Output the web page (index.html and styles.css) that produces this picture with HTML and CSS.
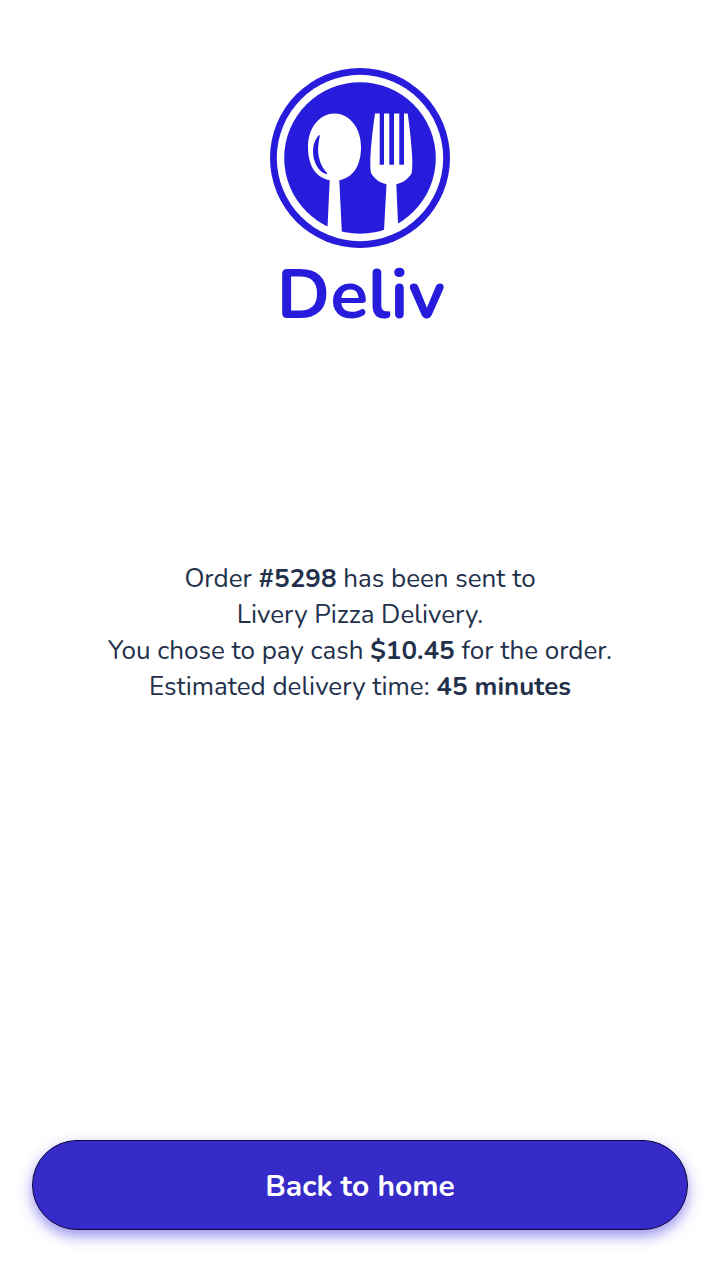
FILE: index.html
```html
<!DOCTYPE html>
<html lang="en">
<head>
<meta charset="utf-8">
<meta name="viewport" content="width=device-width, initial-scale=1">
<title>Deliv</title>
<link rel="stylesheet" href="styles.css">
</head>
<body>
<main class="screen">
  <header class="brand">
    <svg class="brand-mark" viewBox="0 0 180 180" aria-hidden="true">
      <circle cx="90" cy="90" r="90" fill="#271cdc"/>
      <circle cx="90" cy="90" r="83.2" fill="#fff"/>
      <circle cx="90" cy="90" r="75.8" fill="#271cdc"/>
      <path fill="#fff" d="M64.5 45.400C78 45.400 91 58 91 79C91 98 83 109.500 69.3 112.300L72 168L57.4 162L59.7 112.300C46 109.500 38 98 38 79C38 58 51 45.400 64.5 45.400Z"/>
      <path fill="#271cdc" d="M49.300 67C45.500 70 43 77 43 83C43 93 47.500 103 55.500 105.800Q57.800 106.200 57.400 105.500C50 98 47.500 87 48.200 79Q48.600 73 49.700 68.500Q50 66.500 49.300 67Z"/>
      <path fill="#fff" d="M105 45.400H109.700V96.800H114V45.400H119.300V96.800H124V45.400H129.300V96.800H134V45.400H137.700C140 61 141.500 77 142.300 91C142.300 97 142.300 101 141.700 105C138.500 111 132.500 115 126.300 116.200L128.300 162L113.800 166L116.500 116.200C110 115 104.500 111 101 105C100.300 101 100.300 97 100.300 91C101 76 102.800 60 105 45.400Z"/>
    </svg>
    <h1 class="brand-name">Deliv</h1>
  </header>
  <p class="message">
    Order <strong>#5298</strong> has been sent to<br>
    Livery Pizza Delivery.<br>
    You chose to pay cash <strong>$10.45</strong> for the order.<br>
    Estimated delivery time: <strong>45 minutes</strong>
  </p>
  <button class="home-button" type="button">Back to home</button>
</main>
</body>
</html>
```
FILE: styles.css
```css
* {
  box-sizing: border-box;
}

body {
  margin: 0;
  background: #fff;
  color: #22304b;
  font-family: Nunito, Lato, "Open Sans", sans-serif;
}

.screen {
  display: grid;
  grid-template-rows: 1fr auto 1fr;
  min-height: 100vh;
  padding: 36px 32px 50px;
}

.brand {
  display: flex;
  flex-direction: column;
  align-items: center;
  padding-top: 32px;
}

.brand-mark {
  width: 180px;
  height: 180px;
}

.brand-name {
  margin: 0;
  padding-left: 2px;
  color: #271cdc;
  font-size: 70px;
  line-height: 94px;
  font-weight: 700;
}

.message {
  margin: 0;
  font-size: 26px;
  font-weight: 400;
  line-height: 36px;
  text-align: center;
}

.message strong {
  font-weight: 700;
}

.home-button {
  align-self: end;
  height: 90px;
  padding: 2px 24px 0;
  border: 1px solid #0b0838;
  border-radius: 45px;
  background: #362bc8;
  box-shadow: 0 6px 14px rgba(54, 36, 224, 0.5);
  color: #fff;
  font-family: inherit;
  font-size: 30px;
  font-weight: 700;
}
```
